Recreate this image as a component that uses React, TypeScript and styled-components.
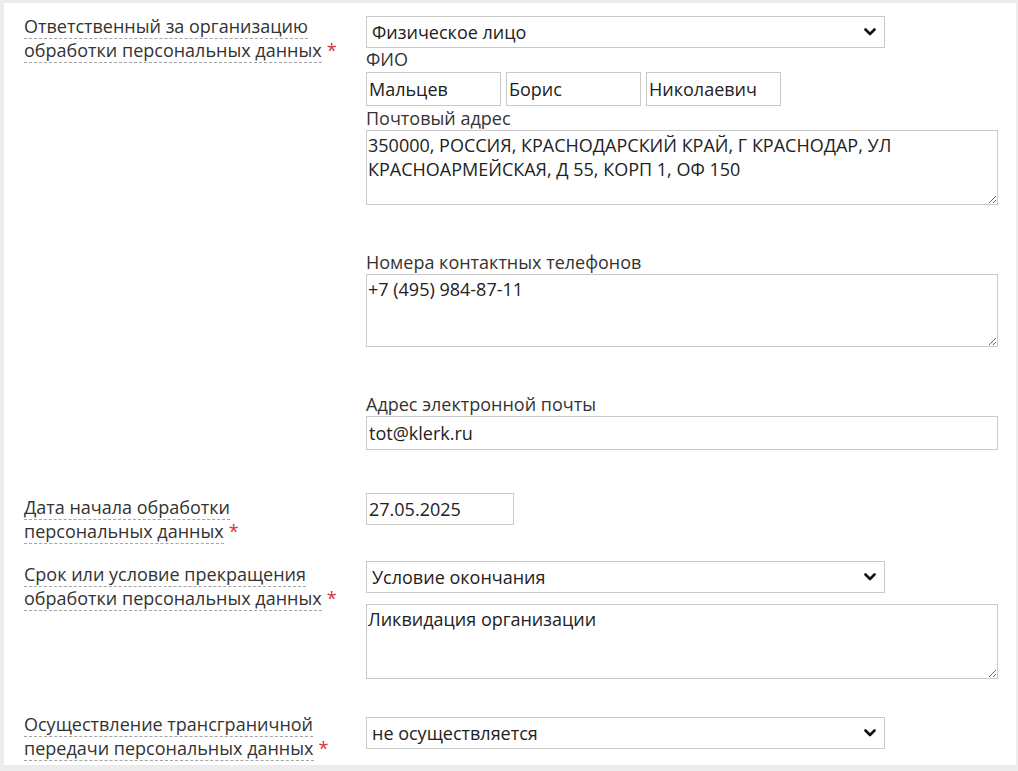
import React from 'react';
import styled, { createGlobalStyle } from 'styled-components';

const GlobalStyle = createGlobalStyle`
  html, body {
    margin: 0;
    padding: 0;
    background: #ececec;
    font-family: "Open Sans", "Noto Sans", Arial, sans-serif;
    color: #333;
  }
  * { box-sizing: border-box; }
`;

const Panel = styled.div`
  margin: 3px 2px 0 4px;
  height: 762px;
  overflow: hidden;
  background: #fff;
  padding: 11px 0 0 20px;
`;

const Row = styled.div<{ $top?: number }>`
  display: grid;
  grid-template-columns: 342px 632px;
  align-items: start;
  margin-top: ${p => p.$top || 0}px;
`;

const Label = styled.div<{ $shift?: number }>`
  margin-top: ${p => p.$shift || 0}px;
  font-size: 18px;
  line-height: 24px;
  color: #333;
`;

const Hint = styled.span`
  border-bottom: 1px dashed #a5a5a5;
`;

const Required = styled.span`
  color: #d9303e;
  margin-left: 5px;
`;

const Field = styled.div<{ $shift?: number }>`
  margin-top: ${p => p.$shift || 0}px;
  display: flex;
  flex-direction: column;
  align-items: flex-start;
`;

const Caption = styled.div`
  font-size: 18px;
  line-height: 23px;
  height: 23px;
  color: #333;
`;

const SelectWrap = styled.div`
  position: relative;
  width: 519px;
  height: 32px;
`;

const Select = styled.select`
  appearance: none;
  width: 100%;
  height: 100%;
  border: 1px solid #c9c9c9;
  border-radius: 0;
  background: #fff;
  padding: 0 30px 0 5px;
  font-family: inherit;
  font-size: 18px;
  color: #222;
  outline: none;
`;

const Chevron = styled.svg`
  position: absolute;
  right: 9px;
  top: 12px;
  pointer-events: none;
`;

const Input = styled.input<{ $width?: number }>`
  width: ${p => (p.$width ? `${p.$width}px` : '100%')};
  height: 34px;
  border: 1px solid #c9c9c9;
  border-radius: 0;
  padding: 0 2px;
  font-family: inherit;
  font-size: 18px;
  color: #222;
  background: #fff;
  outline: none;
`;

const DateInput = styled(Input)`
  height: 32px;
`;

const NameRow = styled.div`
  display: flex;
  gap: 5px;
  margin-top: 1px;
  margin-bottom: 1px;
`;

const TextArea = styled.textarea<{ $after?: number; $height?: number }>`
  display: block;
  width: 632px;
  height: ${p => p.$height || 75}px;
  margin: 0 0 ${p => p.$after || 0}px;
  border: 1px solid #c9c9c9;
  border-radius: 0;
  padding: 2px 1px;
  font-family: inherit;
  font-size: 18px;
  line-height: 24px;
  color: #222;
  background: #fff;
  resize: both;
  outline: none;
`;

const SelectBox: React.FC<{ value: string; gap?: number }> = ({ value, gap }) => (
  <SelectWrap style={gap ? { marginBottom: gap } : undefined}>
    <Select defaultValue={value}>
      <option>{value}</option>
    </Select>
    <Chevron width="12" height="8" viewBox="0 0 12 8">
      <path d="M1.5 1.5 L6 6 L10.5 1.5" fill="none" stroke="#111" strokeWidth="2.6" strokeLinecap="round" strokeLinejoin="round" />
    </Chevron>
  </SelectWrap>
);

const FieldLabel: React.FC<{ lines: string[]; shift?: number }> = ({ lines, shift }) => (
  <Label $shift={shift}>
    <Hint>{lines[0]}</Hint>
    <br />
    <Hint>{lines[1]}</Hint>
    <Required>*</Required>
  </Label>
);

export default function App() {
  return (
    <>
      <GlobalStyle />
      <Panel>
        <Row>
          <FieldLabel lines={['Ответственный за организацию', 'обработки персональных данных']} />
          <Field $shift={2}>
            <SelectBox value="Физическое лицо" />
            <Caption>ФИО</Caption>
            <NameRow>
              <Input $width={135} defaultValue="Мальцев" />
              <Input $width={135} defaultValue="Борис" />
              <Input $width={135} defaultValue="Николаевич" />
            </NameRow>
            <Caption>Почтовый адрес</Caption>
            <TextArea
              $after={46}
              defaultValue="350000, РОССИЯ, КРАСНОДАРСКИЙ КРАЙ, Г КРАСНОДАР, УЛ КРАСНОАРМЕЙСКАЯ, Д 55, КОРП 1, ОФ 150"
            />
            <Caption>Номера контактных телефонов</Caption>
            <TextArea $after={46} $height={73} defaultValue="+7 (495) 984-87-11" />
            <Caption>Адрес электронной почты</Caption>
            <Input defaultValue="tot@klerk.ru" />
          </Field>
        </Row>

        <Row $top={43}>
          <FieldLabel lines={['Дата начала обработки', 'персональных данных']} shift={2} />
          <Field>
            <DateInput $width={148} defaultValue="27.05.2025" />
          </Field>
        </Row>

        <Row $top={18}>
          <FieldLabel lines={['Срок или условие прекращения', 'обработки персональных данных']} shift={1} />
          <Field>
            <SelectBox value="Условие окончания" gap={11} />
            <TextArea defaultValue="Ликвидация организации" />
          </Field>
        </Row>

        <Row $top={33}>
          <FieldLabel lines={['Осуществление трансграничной', 'передачи персональных данных']} />
          <Field $shift={5}>
            <SelectBox value="не осуществляется" />
          </Field>
        </Row>
      </Panel>
    </>
  );
}
